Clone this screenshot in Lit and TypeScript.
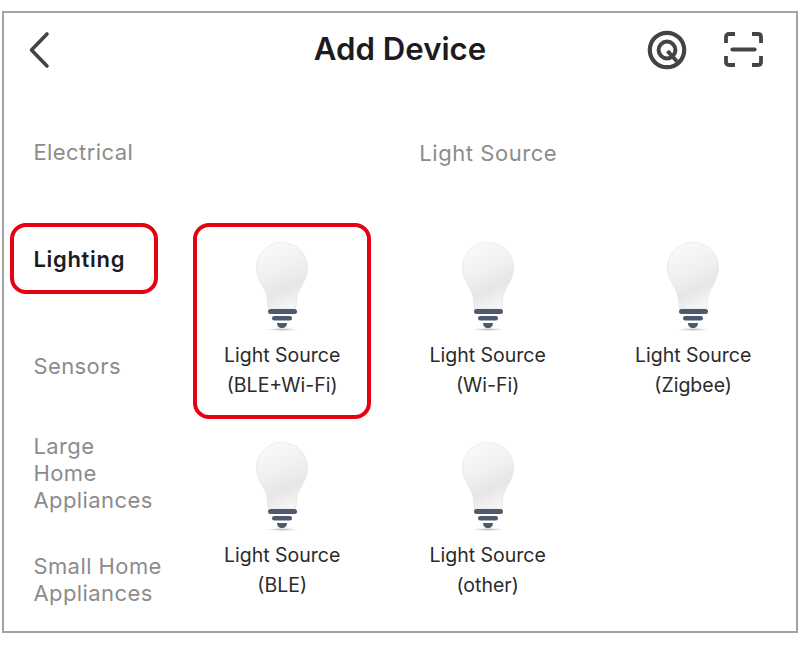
import { LitElement, html, css } from "lit";
import { customElement } from "lit/decorators.js";

const bulb = (id: string) => html`<svg class="bulb" viewBox="0 0 52 90" width="52" height="90" aria-hidden="true">
  <defs>
    <linearGradient id="g${id}" x1="0.25" y1="0" x2="0.6" y2="1">
      <stop offset="0" stop-color="#fafafa"/>
      <stop offset="0.45" stop-color="#f0f0f0"/>
      <stop offset="0.72" stop-color="#e6e6e6"/>
      <stop offset="1" stop-color="#f6f6f6"/>
    </linearGradient>
    <radialGradient id="s${id}"><stop offset="0" stop-color="#bbb"/><stop offset="1" stop-color="#fff"/></radialGradient>
  </defs>
  <ellipse cx="26" cy="87.5" rx="16" ry="1.6" fill="url(#s${id})"/>
  <path d="M26 .5C40.4.5 51.5 11.6 51.5 26 51.5 38 43.5 44 41 55L39.5 67H12.5L11 55C8.5 44 .5 38 .5 26 .5 11.6 11.6.5 26 .5Z" fill="url(#g${id})" stroke="#e4e4e4" stroke-width=".7"/>
  <rect x="12" y="67" width="29" height="5" rx="2.5" fill="#4e5a6c"/>
  <rect x="16" y="74" width="20" height="4.5" rx="2.2" fill="#4e5a6c"/>
  <path d="M21 81H31C31 84 29 86 26 86S21 84 21 81Z" fill="#4e5a6c"/>
</svg>`;

const categories = [
  ["Electrical"],
  ["Lighting"],
  ["Sensors"],
  ["Large", "Home", "Appliances"],
  ["Small Home", "Appliances"],
];
const devices = [
  ["(BLE+Wi-Fi)", true],
  ["(Wi-Fi)", false],
  ["(Zigbee)", false],
  ["(BLE)", false],
  ["(other)", false],
] as [string, boolean][];

@customElement("app-root")
export class AppRoot extends LitElement {
  static styles = css`
    :host { display: block; width: 800px; height: 660px; background: #fff; overflow: hidden;
      font-family: Inter, "Liberation Sans", sans-serif; padding: 11px 0 0 2px; box-sizing: border-box; }
    .frame { width: 796px; height: 622px; box-sizing: border-box; border: 2px solid #a3a3a3; background: #fff;
      display: flex; flex-direction: column; }
    .header { height: 73px; display: grid; grid-template-columns: 1fr auto 1fr; align-items: center; padding: 0 24px; }
    .title { font-size: 31.2px; font-weight: 600; color: #1c1c1e; margin-top: -2px; }
    .actions { display: flex; justify-content: flex-end; gap: 36.5px; align-items: center; padding-right: 8.5px; }
    .back { display: block; }
    .ic-scan { margin-right: 1px; }
    .body { flex: 1; display: flex; min-height: 0; }
    .side { width: 175px; flex: none; padding: 12px 0 0 6px; box-sizing: border-box; }
    .cat { height: 107px; display: flex; align-items: center; }
    .label { width: 148px; min-height: 71px; box-sizing: border-box; border: 4px solid transparent; border-radius: 16px;
      padding: 1px 0 0 19.4px; display: flex; flex-direction: column; justify-content: center; white-space: nowrap;
      font-size: 22px; line-height: 27px; letter-spacing: .42px; color: #8c8c8c; }
    .label.sel { border-color: #e60012; color: #1c1c1e; font-weight: 600; letter-spacing: .7px; }
    .main { flex: 1; display: flex; flex-direction: column; }
    .heading { height: 58px; margin-top: 38px; width: 205.5px; margin-left: 206.5px; text-align: center;
      font-size: 22px; line-height: 58px; letter-spacing: .55px; color: #8c8c8c; }
    .grid { margin-top: 41px; margin-left: .4px; display: grid; grid-template-columns: repeat(3, 205.5px); grid-auto-rows: 196px; row-gap: 4px; }
    .dev { justify-self: center; width: 178px; height: 196px; box-sizing: border-box; border: 4px solid transparent; border-radius: 16px;
      display: flex; flex-direction: column; align-items: center; padding-top: 15px;
      font-size: 19.5px; line-height: 30px; color: #2b2b2b; text-align: center; }
    .dev.sel { border-color: #e60012; }
    .bulb { display: block; margin-bottom: 8px; flex: none; }
  `;

  render() {
    return html`<div class="frame">
      <div class="header">
        <svg class="back" width="24" height="38" viewBox="0 0 24 38"><path d="M19 3 3.5 19 19 35" fill="none" stroke="#444" stroke-width="3.6" stroke-linecap="round" stroke-linejoin="round"/></svg>
        <div class="title">Add Device</div>
        <div class="actions">
          <svg width="40" height="40" viewBox="0 0 40 40" fill="none" stroke="#444"><circle cx="20" cy="20" r="17.2" stroke-width="4.2"/><circle cx="20" cy="20" r="8.4" stroke-width="4"/><path d="M20.5 21 30 31.5" stroke-width="4"/></svg>
          <svg class="ic-scan" width="39" height="35" viewBox="0 0 39 35" fill="none" stroke="#444" stroke-width="3.8" stroke-linejoin="round"><path d="M2 11V5Q2 2 5 2H11M28 2H34Q37 2 37 5V11M37 24V30Q37 33 34 33H28M11 33H5Q2 33 2 30V24"/><path d="M8.5 17.5H30.5" stroke-width="4.2" stroke-linecap="round"/></svg>
        </div>
      </div>
      <div class="body">
        <div class="side">
          ${categories.map((c) => html`<div class="cat"><div class="label ${c[0] === "Lighting" ? "sel" : ""}">${c.map((l) => html`<span>${l}</span>`)}</div></div>`)}
        </div>
        <div class="main">
          <div class="heading">Light Source</div>
          <div class="grid">
            ${devices.map(([sub, sel], i) => html`<div class="dev ${sel ? "sel" : ""}">${bulb(String(i))}<span>Light Source</span><span>${sub}</span></div>`)}
          </div>
        </div>
      </div>
    </div>`;
  }
}
